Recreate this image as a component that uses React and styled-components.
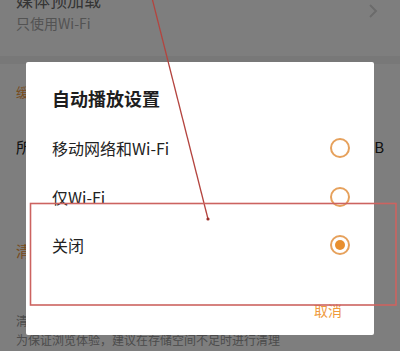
import React from 'react';
import styled, { createGlobalStyle } from 'styled-components';

const GlobalStyle = createGlobalStyle`
  html, body {
    margin: 0;
    padding: 0;
    background: #ffffff;
  }
  body {
    font-family: "Noto Sans CJK SC", "Noto Sans", sans-serif;
  }
  #root {
    width: 400px;
    height: 351px;
    overflow: hidden;
    position: relative;
  }
`;

const Page = styled.div`
  display: flex;
  flex-direction: column;
  width: 400px;
  margin-top: -11px;
  background: #ffffff;
`;

const HeadRow = styled.div`
  display: flex;
  align-items: center;
  justify-content: space-between;
  padding: 0 22px 23px 16px;
`;

const HeadText = styled.div`
  display: flex;
  flex-direction: column;
  gap: 2px;
`;

const RowTitle = styled.div`
  font-size: 17px;
  line-height: 22px;
  color: #6a6a6a;
`;

const RowSub = styled.div`
  font-size: 14px;
  line-height: 20px;
  color: #a8a8a8;
`;

const Band = styled.div`
  height: 8px;
  background: #f3f3f3;
`;

const SectionHeader = styled.div`
  padding: 20px 16px;
  font-size: 13px;
  line-height: 16px;
  color: #f09a3e;
`;

const Row = styled.div`
  display: flex;
  align-items: center;
  justify-content: space-between;
  height: 52px;
  padding: 0 16px;
  margin-top: ${(p) => p.$gap || 0}px;
  font-size: 15px;
  color: ${(p) => (p.$accent ? '#f09a3e' : '#222222')};
`;

const Note = styled.div`
  padding: 35px 16px 0;
  font-size: 12px;
  line-height: 19px;
  color: #9a9a9a;
  white-space: nowrap;
  overflow: hidden;
`;

const Overlay = styled.div`
  position: absolute;
  inset: 0;
  background: rgba(0, 0, 0, 0.505);
  display: flex;
  align-items: flex-start;
  padding: 62px 0 0 26px;
`;

const Dialog = styled.div`
  width: 348px;
  height: 273px;
  background: #ffffff;
  border-radius: 2px;
  display: flex;
  flex-direction: column;
  box-sizing: border-box;
  padding-top: 24px;
`;

const DialogTitle = styled.div`
  padding: 0 26px;
  font-size: 18px;
  line-height: 24px;
  font-weight: 700;
  color: #1e1e1e;
  margin-bottom: 14px;
`;

const Option = styled.div`
  display: flex;
  align-items: center;
  justify-content: space-between;
  height: 48.5px;
  padding: 0 24px 0 26px;
  font-size: 16px;
  color: #222222;
`;

const Radio = styled.span`
  width: 20px;
  height: 20px;
  box-sizing: border-box;
  border: 2px solid #e6a15c;
  border-radius: 50%;
  display: flex;
  align-items: center;
  justify-content: center;

  &::after {
    content: '';
    width: 10px;
    height: 10px;
    border-radius: 50%;
    background: #e88f2f;
    display: ${(p) => (p.$checked ? 'block' : 'none')};
  }
`;

const Footer = styled.div`
  display: flex;
  justify-content: flex-end;
  padding: 29px 32px 0;
`;

const CancelButton = styled.button`
  border: none;
  background: none;
  padding: 0;
  font-family: inherit;
  font-size: 14px;
  line-height: 22px;
  color: #ef9a3d;
`;

const Annotation = styled.svg`
  position: absolute;
  inset: 0;
  pointer-events: none;
`;

const options = [
  { label: '移动网络和Wi-Fi', checked: false },
  { label: '仅Wi-Fi', checked: false },
  { label: '关闭', checked: true },
];

const Chevron = () => (
  <svg width="10" height="16" viewBox="0 0 10 16">
    <polyline points="2,2 8,8 2,14" fill="none" stroke="#d8d8d8" strokeWidth="2" />
  </svg>
);

export default function App() {
  return (
    <>
      <GlobalStyle />
      <Page>
        <HeadRow>
          <HeadText>
            <RowTitle>媒体预加载</RowTitle>
            <RowSub>只使用Wi-Fi</RowSub>
          </HeadText>
          <Chevron />
        </HeadRow>
        <Band />
        <SectionHeader>缓存管理</SectionHeader>
        <Row>
          <span>所占空间</span>
          <span>12.3MB</span>
        </Row>
        <Row $accent $gap={52}>
          <span>清除缓存</span>
        </Row>
        <Note>
          清除缓存将删除本地的图片和视频等临时文件，不影响账号信息3
          <br />
          为保证浏览体验，建议在存储空间不足时进行清理
        </Note>
      </Page>

      <Overlay>
        <Dialog>
          <DialogTitle>自动播放设置</DialogTitle>
          {options.map((o) => (
            <Option key={o.label}>
              <span>{o.label}</span>
              <Radio $checked={o.checked} />
            </Option>
          ))}
          <Footer>
            <CancelButton>取消</CancelButton>
          </Footer>
        </Dialog>
      </Overlay>

      <Annotation width="400" height="351" viewBox="0 0 400 351">
        <line x1="152" y1="-2" x2="208" y2="219" stroke="#b4443f" strokeWidth="1.3" />
        <circle cx="208" cy="219" r="1.6" fill="#9a2f2a" />
        <rect x="30.5" y="203.5" width="365.5" height="101.5" fill="none" stroke="#cc6360" strokeWidth="1.6" />
      </Annotation>
    </>
  );
}
